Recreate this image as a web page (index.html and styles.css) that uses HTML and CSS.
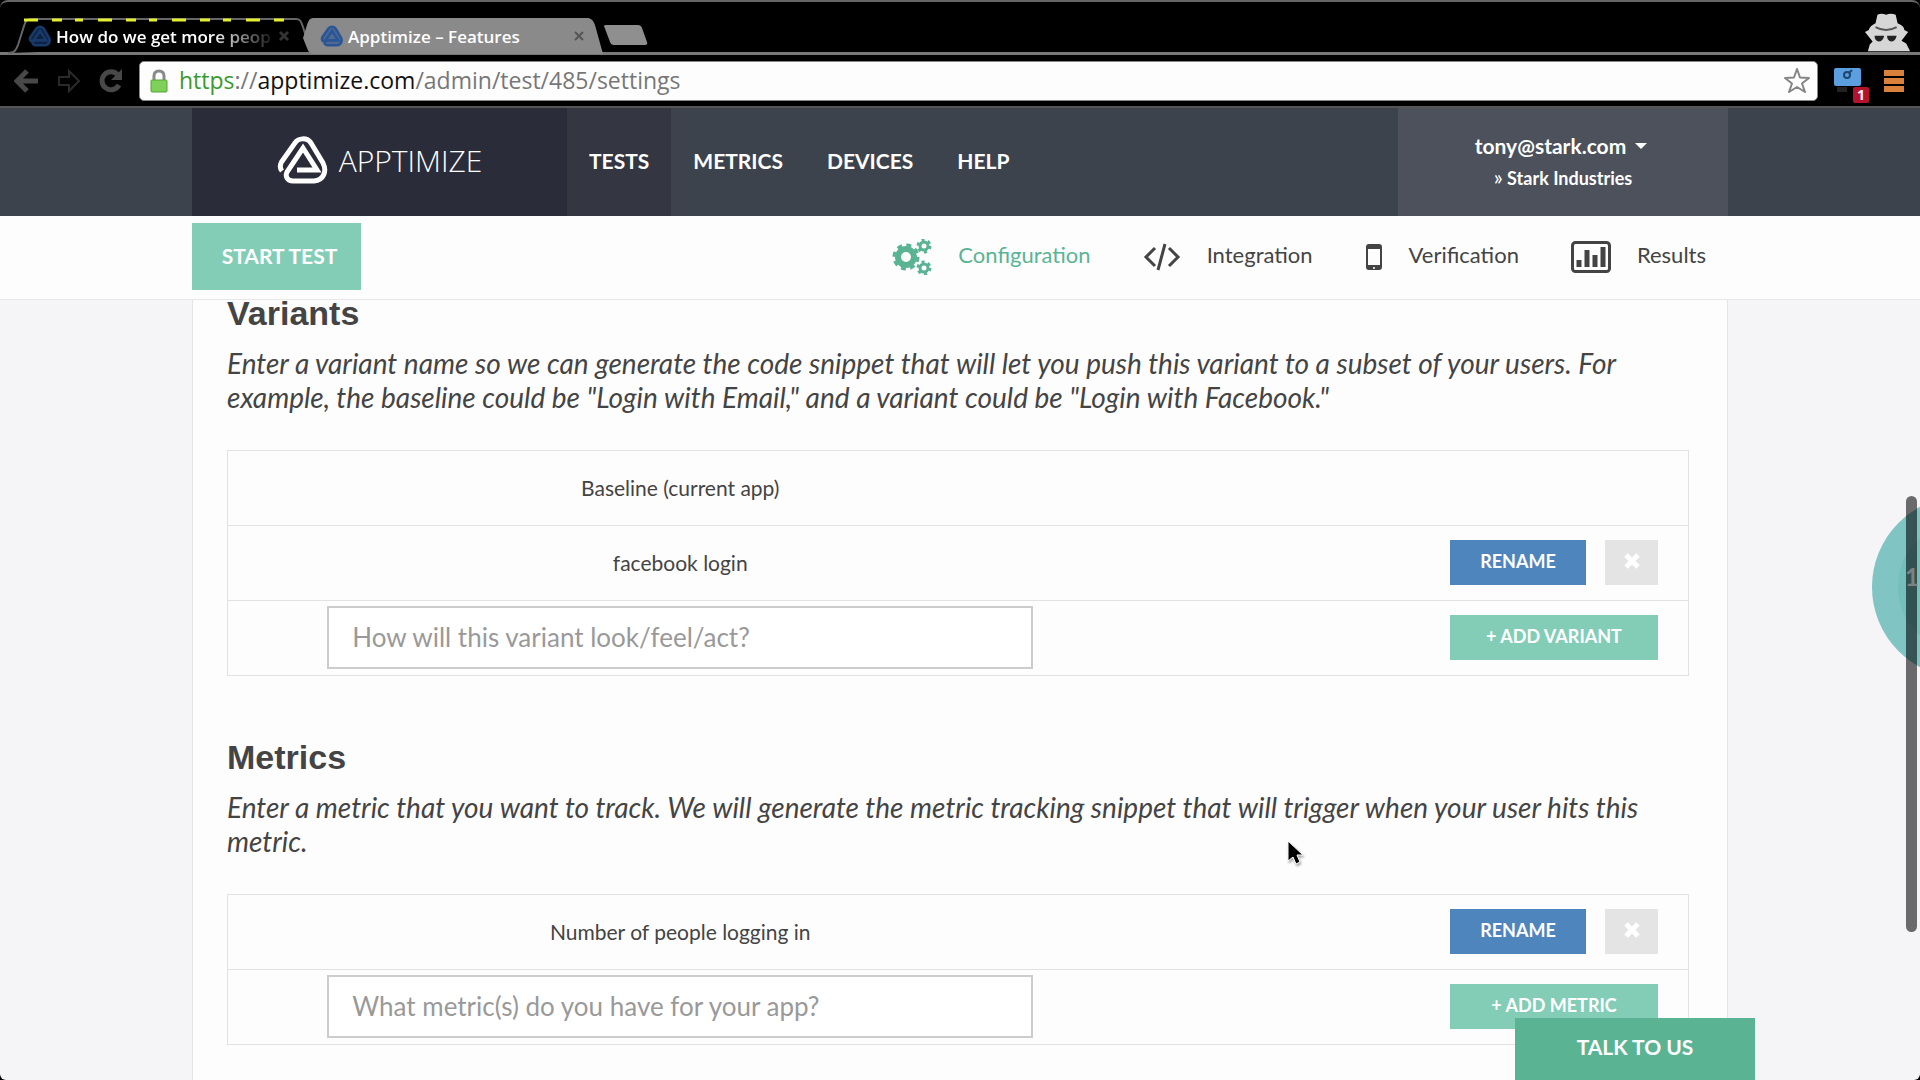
FILE: index.html
```html
<!DOCTYPE html>
<html lang="en">
<head>
<meta charset="utf-8">
<title>How do we get more people</title>
<link rel="stylesheet" href="styles.css">
</head>
<body>
<svg class="defs" width="0" height="0" aria-hidden="true">
  <symbol id="mark" viewBox="0 0 52 50">
    <path d="M5 36 C2.500 33 3 30 4.500 27 L18 8 C21 3 30 2 34 8 L46 28 C50 36 47 45 37 46 L16 46 C10 46 8 41 10 37 L26 13 L40 35 L20 35" fill="none" stroke="currentColor" stroke-width="5" stroke-linejoin="miter"/>
  </symbol>
  <symbol id="favicon" viewBox="0 0 52 50">
    <path d="M5 36 C2.500 33 3 30 4.500 27 L18 8 C21 3 30 2 34 8 L46 28 C50 36 47 45 37 46 L16 46 C10 46 8 41 10 37 L26 13 L40 35 L20 35 Z" fill="currentColor" fill-opacity=".6" stroke="currentColor" stroke-width="6"/>
  </symbol>
  <symbol id="cross" viewBox="0 0 18 18">
    <path d="M3 3 L15 15 M15 3 L3 15" fill="none" stroke="currentColor" stroke-width="5"/>
  </symbol>
</svg>

<div class="browser">
  <div class="tabs">
    <div class="tab tab-active">
      <svg class="tab-edge" viewBox="0 0 300 36" preserveAspectRatio="none" aria-hidden="true">
        <path d="M0 35 C7 35 8 32 10 27 L16 8 C18 2 19 1 24 1 H288 C292 1 293 3 295 9 L300 25" fill="#000" stroke="#666" stroke-width="2"/>
        <path d="M16 2 H280" stroke="#e4f02e" stroke-width="3" stroke-dasharray="14 14 10 13 8 15"/>
      </svg>
      <svg class="favicon dim"><use href="#favicon"/></svg>
      <span class="tab-title">How do we get more peop</span>
      <button class="tab-close" aria-label="Close tab"><svg width="12" height="12" viewBox="0 0 12 12"><path d="M2 2 L10 10 M10 2 L2 10" stroke="currentColor" stroke-width="3"/></svg></button>
    </div>
    <div class="tab tab-back">
      <svg class="tab-edge" viewBox="0 0 300 36" preserveAspectRatio="none" aria-hidden="true">
        <path d="M0 20 L4 7 C6 1 7 0 12 0 H284 C288 0 290 2 292 7 L300 36 H12 C6 36 6 34 4 30 Z" fill="#8a8a8a"/>
      </svg>
      <svg class="favicon"><use href="#favicon"/></svg>
      <span class="tab-title">Apptimize – Features</span>
      <button class="tab-close" aria-label="Close tab"><svg width="12" height="12" viewBox="0 0 12 12"><path d="M2 2 L10 10 M10 2 L2 10" stroke="currentColor" stroke-width="2"/></svg></button>
    </div>
    <button class="new-tab" aria-label="New tab">
      <svg width="46" height="22" viewBox="0 0 46 22"><path d="M1 2 Q1 1 3 1 H35 Q38 1 39 4 L44 18 Q45 21 42 21 H11 Q8 21 7 18 Z" fill="#8f8f8f"/></svg>
    </button>
    <svg class="incognito" width="48" height="40" viewBox="0 0 50 40" aria-hidden="true">
      <path d="M14 2 Q18 0 23 2 Q28 0 33 2 L35 11 Q42 14 42 18 L46 20 L39 29 L44 32 L48 40 H4 L6 33 L9 30 L1 20 L5 18 Q6 14 12 11 Z" fill="#d6d6d6"/>
      <path d="M12 15 Q23 21 34 15" fill="none" stroke="#555" stroke-width="2"/>
      <path d="M11 24 H21 Q20 30 15 30 Q11 29 11 24 M24 24 H34 Q33 30 28 30 Q24 29 24 24" fill="#222"/>
    </svg>
  </div>
  <div class="toolbar">
    <button class="tool" aria-label="Back"><svg width="26" height="26" viewBox="0 0 26 26"><path d="M13 3 L3 13 L13 23 M4 13 H24" fill="none" stroke="#484848" stroke-width="5"/></svg></button>
    <button class="tool" aria-label="Forward"><svg width="26" height="26" viewBox="0 0 26 26"><path d="M13 3 L23 13 L13 23 V17 H3 V9 H13 Z" fill="none" stroke="#2a2a2a" stroke-width="2"/></svg></button>
    <button class="tool" aria-label="Reload"><svg width="26" height="26" viewBox="0 0 26 26"><path d="M20 7 A9 9 0 1 0 21 17" fill="none" stroke="#484848" stroke-width="5"/><path d="M24 1 V12 H13 Z" fill="#484848"/></svg></button>
    <div class="omnibox">
      <svg width="18" height="24" viewBox="0 0 18 24" aria-hidden="true"><path d="M4 12 V7 Q4 2 9 2 Q14 2 14 7 V12" fill="none" stroke="#8a8a8a" stroke-width="3"/><rect x="1" y="11" width="16" height="12" rx="1" fill="#7ed058" stroke="#57a33a"/></svg>
      <div class="url"><span class="scheme">https</span>://<span class="host">apptimize.com</span>/admin/test/485/settings</div>
      <button class="star" aria-label="Bookmark"><svg width="28" height="28" viewBox="0 0 28 28"><path d="M14 2 L17 10.500 L26 11 L19 16.500 L22 25 L14 20 L6 25 L9 16.500 L2 11 L11 10.500 Z" fill="none" stroke="#858585" stroke-width="2" stroke-linejoin="round"/></svg></button>
    </div>
    <button class="extension" aria-label="Extension">
      <svg width="30" height="28" viewBox="0 0 30 28"><rect x="1" y="1" width="27" height="18" rx="2" fill="#5c9fe0"/><path d="M4 20 H14 V25 H4 Z" fill="#222"/><circle cx="14" cy="8" r="3" fill="none" stroke="#1d4670" stroke-width="2"/><path d="M16 6 L19 3" stroke="#1d4670" stroke-width="2"/></svg>
      <span class="badge">1</span>
    </button>
    <button class="menu" aria-label="Menu"><svg width="20" height="24" viewBox="0 0 20 24"><path d="M0 4 H20 M0 12 H20 M0 20 H20" stroke="#d9803c" stroke-width="6"/></svg></button>
  </div>
</div>

<div class="page">
  <header class="header">
    <div class="wrap header-row">
      <a class="logo" href="#"><svg width="52" height="50"><use href="#mark"/></svg><span>APPTIMIZE</span></a>
      <nav class="nav">
        <a class="current" href="#">TESTS</a><a href="#">METRICS</a><a href="#">DEVICES</a><a href="#">HELP</a>
      </nav>
      <div class="account">
        <button class="user">tony@stark.com<span class="caret"></span></button>
        <a class="company" href="#"><span class="raquo">»</span> Stark Industries</a>
      </div>
    </div>
  </header>

  <div class="subbar">
    <div class="wrap subbar-row">
      <button class="btn start">START TEST</button>
      <nav class="steps">
        <a class="active" href="#"><svg width="40" height="36" viewBox="0 0 40 36">
          <g fill="none" stroke="currentColor">
            <circle cx="14" cy="18" r="8" stroke-width="6"/>
            <circle cx="14" cy="18" r="12" stroke-width="3" stroke-dasharray="5 4.425"/>
            <circle cx="32" cy="7" r="4" stroke-width="3"/>
            <circle cx="32" cy="7" r="6" stroke-width="3" stroke-dasharray="3 3.283"/>
            <circle cx="32" cy="29" r="4" stroke-width="3"/>
            <circle cx="32" cy="29" r="6" stroke-width="3" stroke-dasharray="3 3.283"/>
          </g></svg><span>Configuration</span></a>
        <a href="#"><svg width="38" height="30" viewBox="0 0 38 30"><path d="M12 6 L3 15 L12 24 M26 6 L35 15 L26 24 M22 2 L15 28" fill="none" stroke="currentColor" stroke-width="3"/></svg><span>Integration</span></a>
        <a href="#"><svg width="18" height="28" viewBox="0 0 18 28"><path fill-rule="evenodd" d="M4 1 H14 Q17 1 17 4 V24 Q17 27 14 27 H4 Q1 27 1 24 V4 Q1 1 4 1 Z M3 6 V22 H15 V6 Z" fill="currentColor"/><circle cx="9" cy="25" r="1" fill="#fff"/></svg><span>Verification</span></a>
        <a href="#"><svg width="40" height="32" viewBox="0 0 40 32"><rect x="1.500" y="1.500" width="37" height="29" rx="3" fill="none" stroke="currentColor" stroke-width="3"/><path d="M8 26 V19 M16 26 V9 M24 26 V14 M32 26 V6" stroke="currentColor" stroke-width="5"/></svg><span>Results</span></a>
      </nav>
    </div>
  </div>

  <main class="wrap panel">
    <section>
      <h2>Variants</h2>
      <p>Enter a variant name so we can generate the code snippet that will let you push this variant to a subset of your users. For example, the baseline could be "Login with Email," and a variant could be "Login with Facebook."</p>
      <table>
        <tr><td class="name">Baseline (current app)</td><td></td></tr>
        <tr><td class="name">facebook login</td><td><div class="actions"><button class="btn rename">RENAME</button><button class="btn remove" aria-label="Remove variant"><svg width="18" height="18"><use href="#cross"/></svg></button></div></td></tr>
        <tr><td class="name"><input type="text" aria-label="New variant" placeholder="How will this variant look/feel/act?"></td><td><div class="actions"><button class="btn add">+ ADD VARIANT</button></div></td></tr>
      </table>
    </section>
    <section>
      <h2>Metrics</h2>
      <p>Enter a metric that you want to track. We will generate the metric tracking snippet that will trigger when your user hits this metric.</p>
      <table>
        <tr><td class="name">Number of people logging in</td><td><div class="actions"><button class="btn rename">RENAME</button><button class="btn remove" aria-label="Remove metric"><svg width="18" height="18"><use href="#cross"/></svg></button></div></td></tr>
        <tr><td class="name"><input type="text" aria-label="New metric" placeholder="What metric(s) do you have for your app?"></td><td><div class="actions"><button class="btn add">+ ADD METRIC</button></div></td></tr>
      </table>
    </section>
  </main>

  <div class="bubble"></div>
  <div class="scrollbar"><span>1</span></div>
  <button class="btn talk">TALK TO US</button>
  <svg class="cursor" width="20" height="28" viewBox="0 0 20 28" aria-hidden="true"><path d="M1 1 V21 L6 17 L9 24 L13 22 L10 15 H16 Z" fill="#000" stroke="#fff"/></svg>
</div>
</body>
</html>
```

FILE: styles.css
```css
* { box-sizing: border-box; }
html { height: 100%; background: #000; }
body {
  margin: 0;
  min-height: 100%;
  display: flex;
  flex-direction: column;
  font-family: Lato, "Liberation Sans", sans-serif;
  font-size: 21px;
  color: #444;
}
button { font: inherit; border: 0; margin: 0; padding: 0; background: none; color: inherit; }
a { color: inherit; text-decoration: none; }
svg { display: block; flex: none; }
.defs { position: absolute; }

/* Browser window */
.browser {
  background: #000;
  border-top: 2px solid #666;
  border-bottom: 2px solid #555;
  border-radius: 8px 8px 0 0;
  font-family: "Open Sans", "Noto Sans", sans-serif;
}
.tabs {
  display: flex;
  align-items: flex-end;
  height: 53px;
  padding: 0 8px;
  border-bottom: 3px solid #777;
}
.tab {
  position: relative;
  display: flex;
  align-items: center;
  width: 300px;
  height: 36px;
  margin-bottom: -2px;
  padding: 0 18px 0 20px;
  color: #fff;
  font-size: 17px;
  font-weight: 600;
}
.tab-back { margin-left: -5px; padding-left: 17px; }
.tab-edge { position: absolute; inset: 0; width: 100%; height: 100%; }
.favicon { position: relative; width: 24px; height: 22px; color: #2a5596; }
.dim { color: #173a6b; }
.tab-title { position: relative; flex: 1; margin-left: 4px; white-space: nowrap; }
.tab-active .tab-title { -webkit-mask-image: linear-gradient(90deg, #000 70%, transparent); mask-image: linear-gradient(90deg, #000 70%, transparent); }
.tab-close { position: relative; color: #555; }
.tab-active .tab-close { color: #333; }
.new-tab { margin: 0 auto 6px 0; }
.toolbar { display: flex; align-items: center; height: 51px; padding: 0 16px 0 14px; }
.tool { width: 42px; }
.tool:nth-child(3) { width: 41px; }
.omnibox {
  flex: 1;
  display: flex;
  align-items: center;
  height: 40px;
  padding: 0 6px 0 10px;
  background: #fdfdfd;
  border: 1px solid #888;
  border-radius: 5px;
}
.url { flex: 1; margin-left: 11px; padding-bottom: 2px; color: #777; font-size: 23px; line-height: 32px; }
.scheme { color: #3c9a2c; }
.host { color: #111; }
.extension { position: relative; margin-left: 15px; }
.badge {
  position: absolute;
  right: -6px;
  bottom: -8px;
  width: 16px;
  height: 16px;
  background: #b5122b;
  border-radius: 2px;
  color: #fff;
  font-size: 14px;
  font-weight: 700;
  line-height: 16px;
}
.menu { margin-left: 21px; }

/* Site */
.page {
  position: relative;
  flex: 1;
  display: flex;
  flex-direction: column;
  overflow: hidden;
  background: #f5f4f7;
  border-radius: 0 0 6px 6px;
}
.wrap { width: 80%; margin: 0 auto; }
.header { background: #3d434d; }
.header-row { display: flex; height: 108px; }
.logo {
  display: flex;
  align-items: center;
  justify-content: center;
  gap: 10px;
  width: 375px;
  padding-bottom: 4px;
  background: #2b2c39;
  color: #fff;
  font-family: "Open Sans", sans-serif;
  font-size: 30px;
  font-weight: 300;
}
.nav { display: flex; flex: 1; }
.nav a {
  display: flex;
  align-items: center;
  padding: 0 22px 4px;
  color: #fff;
  font-weight: 700;
}
.nav .current { background: #343642; }
.account {
  display: flex;
  flex-direction: column;
  align-items: center;
  justify-content: center;
  gap: 3px;
  width: 330px;
  background: #4c515b;
  color: #fff;
  font-weight: 700;
}
.user { display: flex; align-items: center; margin-right: 4px; line-height: 28px; }
.caret { margin-left: 9px; border: 6px solid transparent; border-top-color: #fff; border-bottom: 0; }
.company { font-size: 18px; line-height: 28px; }
.raquo { font-size: 21px; font-weight: 400; }

.subbar { background: #fdfdfd; border-bottom: 1px solid #e8e8ea; }
.subbar-row { display: flex; align-items: center; justify-content: space-between; height: 83px; padding-bottom: 2px; }
.btn {
  height: 45px;
  padding-bottom: 2px;
  color: #fff;
  font-size: 18px;
  font-weight: 700;
}
.start { width: 169px; height: 67px; padding: 0 0 2px 6px; background: #83cdb7; font-size: 21px; }
.steps { display: flex; gap: 52px; padding-right: 22px; font-size: 22px; }
.steps a { display: flex; align-items: center; gap: 26px; }
.steps span { padding-bottom: 4px; }
.steps .active { color: #5ab493; }

.panel {
  flex: 1;
  padding: 0 38px 0 34px;
  background: #fdfdfd;
  border: solid #e4e4e6;
  border-width: 0 1px;
}
section + section { margin-top: 68px; }
h2 { margin: 0; font-family: "Liberation Sans", sans-serif; font-size: 34px; line-height: 26px; }
p { margin: 20px 0 36px; font-size: 28px; font-style: italic; line-height: 34px; }
table { width: 100%; border: 1px solid #e2e2e2; border-collapse: collapse; table-layout: fixed; }
tr { height: 75px; }
td { padding: 0 30px 2px 0; border: 0 solid #e2e2e2; border-width: 1px 0; }
.name { width: 905px; padding: 0 0 2px; text-align: center; }
input {
  display: block;
  width: 706px;
  height: 63px;
  margin: 0 auto;
  padding: 0 23px;
  border: 2px solid #ccc;
  background: #fff;
  font: inherit;
  font-size: 26px;
}
input::placeholder { color: #999; opacity: 1; }
.actions { display: flex; justify-content: flex-end; gap: 19px; }
.rename { width: 136px; background: #4f85bd; }
.remove { display: flex; align-items: center; justify-content: center; width: 53px; background: #e4e4e4; }
.add { width: 208px; background: #83cdb7; }

.talk { position: fixed; right: 165px; bottom: 0; width: 240px; height: 62px; padding-bottom: 6px; background: #5ab493; font-size: 21px; }
.bubble { position: absolute; left: 100%; top: 388px; width: 182px; height: 182px; margin-left: -48px; border-radius: 50%; border: 26px solid #80c4c4; background: #74bfbb; }
.scrollbar { position: absolute; right: 3px; top: 388px; width: 11px; height: 436px; background: rgba(0, 0, 0, .57); border-radius: 6px; }
.scrollbar span { position: absolute; top: 66px; left: -1px; color: #7b8283; font-size: 24px; font-weight: 700; }
.cursor { position: absolute; left: 1287px; top: 732px; filter: drop-shadow(1px 2px 1px #0005); }
```
